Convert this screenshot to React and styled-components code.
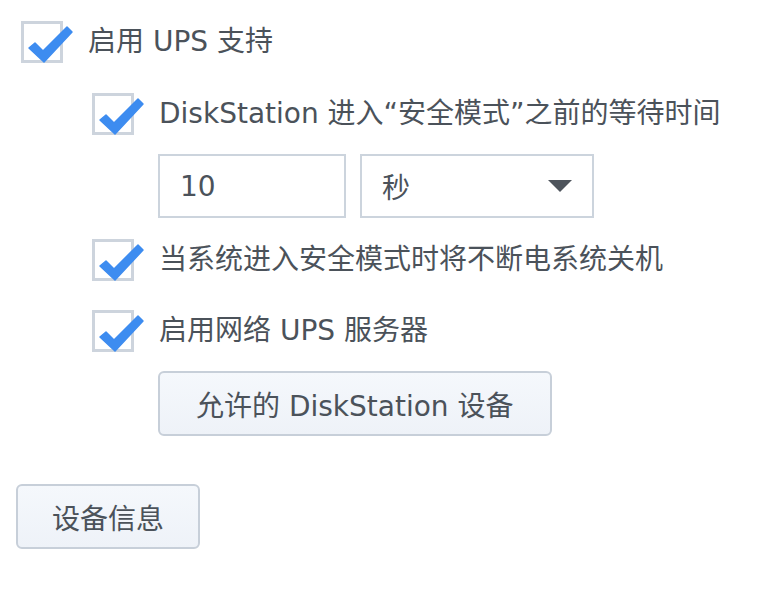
import React from 'react'
import styled, { createGlobalStyle } from 'styled-components'

const Global = createGlobalStyle`
  body {
    margin: 0;
    background: #ffffff;
    font-family: "DejaVu Sans", "Noto Sans CJK SC", sans-serif;
    color: #4b525a;
  }
`

const Page = styled.div`
  padding: 21px 0 0 16px;
  display: flex;
  flex-direction: column;
  align-items: flex-start;
`

const Row = styled.div`
  display: flex;
  align-items: center;
  gap: 25px;
  margin-left: ${p => p.indent || 0}px;
  margin-top: ${p => p.top || 0}px;
  font-size: 28px;
  line-height: 42px;
  white-space: nowrap;
`

const Box = styled.span`
  position: relative;
  width: 42px;
  height: 42px;
  box-sizing: border-box;
  border: 3px solid #cdd4dd;
  background: #fff;
  flex: none;

  svg {
    position: absolute;
    left: -3px;
    top: -3px;
  }
`

const Fields = styled.div`
  display: flex;
  gap: 14px;
  margin: 19px 0 0 142px;
`

const Field = styled.div`
  width: ${p => p.w}px;
  height: 64px;
  box-sizing: border-box;
  border: 2px solid #ccd4dd;
  display: flex;
  align-items: center;
  justify-content: space-between;
  padding: 0 20px;
  font-size: 28px;
  background: #fff;
`

const Arrow = styled.span`
  width: 0;
  height: 0;
  border-left: 12px solid transparent;
  border-right: 12px solid transparent;
  border-top: 12px solid #4e545c;
`

const Button = styled.button`
  font-family: inherit;
  font-size: 28px;
  color: #4b525a;
  height: 65px;
  padding: 0 ${p => p.pad || 35}px;
  margin-left: ${p => p.indent || 0}px;
  margin-top: ${p => p.top}px;
  border: 2px solid #c7cfd9;
  border-radius: 6px;
  background: linear-gradient(#f5f8fc, #eef2f8);
  white-space: nowrap;
`

function Checkbox() {
  return (
    <Box>
      <svg width="54" height="46" viewBox="0 0 54 46">
        <path
          d="M8 27 L14 22 L22 30 L46 6 L51 11 L23 41 Z"
          fill="#3d8cf0"
          stroke="#3d8cf0"
          strokeWidth="1.5"
          strokeLinejoin="round"
        />
      </svg>
    </Box>
  )
}

export default function App() {
  return (
    <Page>
      <Global />
      <Row indent={5}>
        <Checkbox />
        <span>启用 UPS 支持</span>
      </Row>
      <Row indent={76} top={30}>
        <Checkbox />
        <span>DiskStation 进入“安全模式”之前的等待时间</span>
      </Row>
      <Fields>
        <Field w={188}>10</Field>
        <Field w={234}>
          <span>秒</span>
          <Arrow />
        </Field>
      </Fields>
      <Row indent={76} top={21}>
        <Checkbox />
        <span>当系统进入安全模式时将不断电系统关机</span>
      </Row>
      <Row indent={76} top={29}>
        <Checkbox />
        <span>启用网络 UPS 服务器</span>
      </Row>
      <Button indent={142} top={19} pad={36}>允许的 DiskStation 设备</Button>
      <Button top={48} pad={34}>设备信息</Button>
    </Page>
  )
}
